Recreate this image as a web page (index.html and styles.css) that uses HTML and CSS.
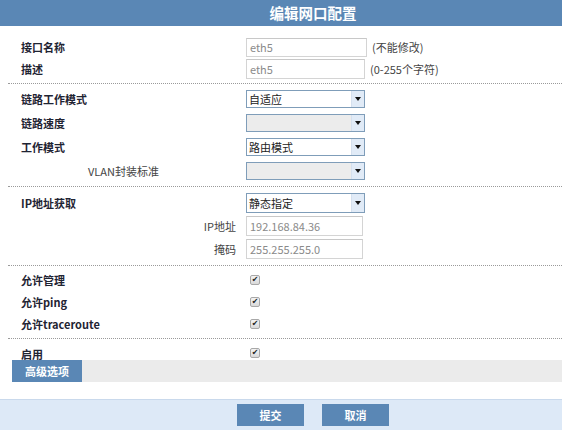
FILE: index.html
```html
<!DOCTYPE html>
<html>
<head>
<meta charset="utf-8">
<link rel="stylesheet" href="styles.css">
</head>
<body>
<div class="page">
  <div class="header"><span class="title">编辑网口配置</span></div>

  <div class="section s1">
    <div class="row">
      <div class="label">接口名称</div>
      <div class="ctrl"><div class="input w121">eth5</div><span class="hint">(不能修改)</span></div>
    </div>
    <div class="row">
      <div class="label">描述</div>
      <div class="ctrl"><div class="input w119">eth5</div><span class="hint">(0-255个字符)</span></div>
    </div>
  </div>

  <div class="section s2">
    <div class="row">
      <div class="label">链路工作模式</div>
      <div class="ctrl"><div class="select"><span class="val">自适应</span><span class="arrow"></span></div></div>
    </div>
    <div class="row">
      <div class="label">链路速度</div>
      <div class="ctrl"><div class="select disabled"><span class="val"></span><span class="arrow"></span></div></div>
    </div>
    <div class="row">
      <div class="label">工作模式</div>
      <div class="ctrl"><div class="select"><span class="val">路由模式</span><span class="arrow"></span></div></div>
    </div>
    <div class="row">
      <div class="label sub indent">VLAN封装标准</div>
      <div class="ctrl"><div class="select disabled"><span class="val"></span><span class="arrow"></span></div></div>
    </div>
  </div>

  <div class="section s3">
    <div class="row">
      <div class="label">IP地址获取</div>
      <div class="ctrl"><div class="select tall"><span class="val">静态指定</span><span class="arrow"></span></div></div>
    </div>
    <div class="row">
      <div class="label sub right">IP地址</div>
      <div class="ctrl"><div class="input w117">192.168.84.36</div></div>
    </div>
    <div class="row">
      <div class="label sub right">掩码</div>
      <div class="ctrl"><div class="input w117">255.255.255.0</div></div>
    </div>
  </div>

  <div class="section s4">
    <div class="row">
      <div class="label">允许管理</div>
      <div class="ctrl"><span class="check">✔</span></div>
    </div>
    <div class="row">
      <div class="label">允许ping</div>
      <div class="ctrl"><span class="check">✔</span></div>
    </div>
    <div class="row">
      <div class="label">允许traceroute</div>
      <div class="ctrl"><span class="check">✔</span></div>
    </div>
  </div>

  <div class="section s5">
    <div class="row">
      <div class="label">启用</div>
      <div class="ctrl"><span class="check">✔</span></div>
    </div>
  </div>

  <div class="advbar"><span class="advbtn">高级选项</span></div>

  <div class="footer">
    <span class="btn">提交</span>
    <span class="btn">取消</span>
  </div>
</div>
</body>
</html>
```

FILE: styles.css
```css
html, body {
  margin: 0;
  padding: 0;
  background: #ffffff;
}
body {
  font-family: "Noto Sans CJK SC", "Noto Sans", sans-serif;
  font-size: 11px;
  color: #222;
}
.page {
  width: 562px;
  height: 433px;
  overflow: hidden;
}
.header {
  height: 26px;
  background: #5a87b5;
  display: flex;
  align-items: center;
  justify-content: center;
  padding-left: 64px;
}
.title {
  color: #ffffff;
  font-size: 14.5px;
  font-weight: bold;
  line-height: 16px;
}
.section {
  margin-left: 8px;
  padding-left: 13px;
  border-bottom: 1px dotted #9a9a9a;
}
.s1 { padding-top: 10px; padding-bottom: 3px; }
.s1 .row { height: 22px; }
.s2 { padding-top: 3px; padding-bottom: 3px; }
.s2 .row { height: 24px; }
.s3 { padding-top: 4px; padding-bottom: 5px; }
.s3 .row { height: 23px; }
.s4 { padding-top: 3px; padding-bottom: 3px; }
.s4 .row { height: 22px; }
.s5 { border-bottom: none; }
.s5 .row { height: 21px; align-items: end; }
.s5 .label { line-height: 11px; }
.s5 .ctrl { margin-bottom: 2px; }
.row {
  display: grid;
  grid-template-columns: 225px 1fr;
  align-items: center;
}
.label {
  font-weight: bold;
  color: #1f2433;
  line-height: 14px;
  white-space: nowrap;
}
.label.sub {
  font-weight: normal;
  color: #444;
}
.label.indent { padding-left: 67px; }
.label.right { text-align: right; padding-right: 10px; }
.ctrl {
  display: flex;
  align-items: center;
}
.input {
  box-sizing: border-box;
  height: 20px;
  border: 1px solid #d4d4d4;
  border-top-color: #c8c8c8;
  background: #fff;
  color: #8a8a8a;
  padding-left: 3px;
  line-height: 18px;
  font-size: 11px;
}
.w121 { width: 121px; height: 19px; line-height: 17px; }
.w119 { width: 119px; }
.w117 { width: 117px; }
.hint {
  margin-left: 5px;
  color: #444;
  font-size: 11px;
}
.select {
  box-sizing: border-box;
  width: 119px;
  height: 18px;
  border: 1px solid #7f9db9;
  display: flex;
  background: #fff;
}
.select.tall { height: 20px; }
.select.disabled { background: #ececec; }
.select .val {
  flex: 1;
  padding-left: 2px;
  color: #222;
  line-height: 16px;
  font-size: 11px;
}
.select.tall .val { line-height: 18px; }
.select .arrow {
  width: 12px;
  background: #e1ebf7;
  border-left: 1px solid #d5e0ee;
  position: relative;
}
.select .arrow::after {
  content: "";
  position: absolute;
  left: 3px;
  top: 50%;
  margin-top: -2px;
  border-left: 3px solid transparent;
  border-right: 3px solid transparent;
  border-top: 4px solid #111;
}
.check {
  box-sizing: border-box;
  width: 10px;
  height: 10px;
  margin-left: 4px;
  border: 1px solid #a8a8a8;
  border-radius: 2px;
  background: linear-gradient(#f4f4f4, #d9d9d9);
  color: #222;
  font-size: 8px;
  line-height: 8px;
  text-align: center;
  font-family: "DejaVu Sans", sans-serif;
}
.advbar {
  margin-left: 12px;
  height: 22px;
  background: #ebebeb;
  display: flex;
}
.advbtn {
  width: 70px;
  background: #5a87b5;
  color: #fff;
  font-weight: bold;
  text-align: center;
  line-height: 22px;
}
.footer {
  margin-top: 17px;
  height: 30px;
  background: #dde9f7;
  border-top: 1px solid #c9d9ec;
  display: flex;
  align-items: center;
  justify-content: center;
  gap: 18px;
  padding-left: 64px;
}
.btn {
  width: 67px;
  height: 22px;
  background: #5a87b5;
  color: #fff;
  font-weight: bold;
  text-align: center;
  line-height: 22px;
}
```
